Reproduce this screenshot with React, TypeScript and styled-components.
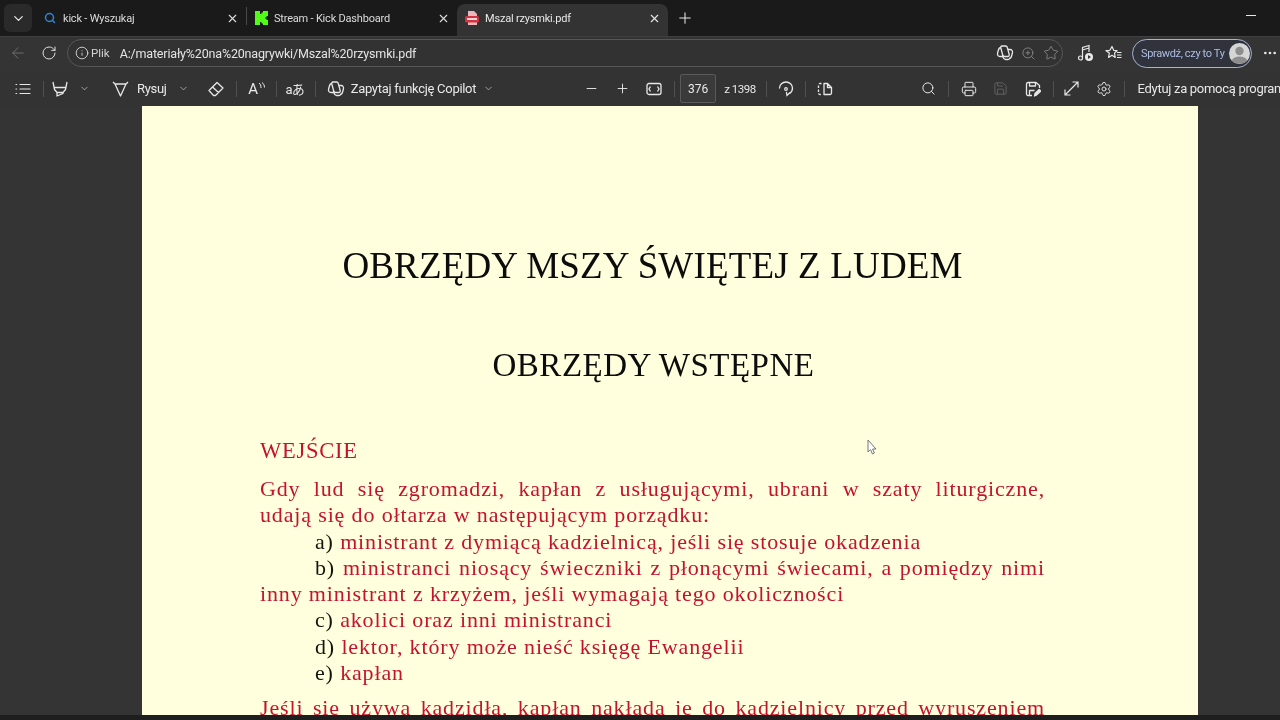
import styled, { createGlobalStyle } from "styled-components";
import {
  ArrowLeft,
  ChevronDown,
  Info,
  Minus,
  MoreHorizontal,
  Plus,
  Printer,
  RotateCw,
  Save,
  Search,
  Settings,
  Star,
  X,
  ZoomIn,
} from "lucide-react";

const GlobalStyle = createGlobalStyle`
  html, body {
    margin: 0;
    padding: 0;
    height: 100%;
    overflow: hidden;
    background: #333;
  }
`;

const CopilotIcon = ({ size = 18 }: { size?: number }) => (
  <svg width={size} height={size} viewBox="0 0 18 18" fill="none" stroke="currentColor" strokeWidth="1.3" strokeLinejoin="round">
    <path d="M6 2h3.500c1 0 1.600.6 1.800 1.500l1.900 7c.3 1.100-.4 2-1.500 2H8.500c-1 0-1.600-.6-1.800-1.500l-1.900-7C4.500 3 5 2 6 2z" />
    <path d="M5 3.500C3.500 3.500 2.800 4.500 2.400 6L1.600 9c-.5 2 .5 3.500 2.400 3.500h3" />
    <path d="M13 14.500c1.500 0 2.200-1 2.600-2.500l.8-3c.5-2-.5-3.500-2.400-3.500h-2M6.500 11l.5 2c.3 1 .9 2.500 2.500 2.500H12c1 0 1.500-.5 1.500-1" />
  </svg>
);

const HighlightIcon = () => (
  <svg width="16" height="18" viewBox="0 0 16 18" fill="none" stroke="currentColor" strokeWidth="1.300" strokeLinejoin="round">
    <path d="M1 2l1.500 7.500 2.500 3V16l6-2.500v-1l2.500-3L15 2M2.200 7.500h11.600M5 12.500h6" />
  </svg>
);

const DrawIcon = () => (
  <svg width="17" height="18" viewBox="0 0 17 18" fill="none" stroke="currentColor" strokeWidth="1.300" strokeLinejoin="round">
    <path d="M1 2l2 2h11l2-2M3 4l5.500 12L14 4" />
  </svg>
);

const EraserIcon = () => (
  <svg width="16" height="16" viewBox="0 0 16 16" fill="none" stroke="currentColor" strokeWidth="1.300" strokeLinejoin="round">
    <path d="M1 9.500L9 1.500l6 5.500-7.500 7.500H5.500zM4.500 6l6 5.500" />
  </svg>
);

const ReadAloudIcon = () => (
  <svg width="7" height="8" viewBox="0 0 7 8" fill="none" stroke="currentColor" strokeWidth="1">
    <path d="M1 1c1.500 1 2 2.500 2 5M4 .5c1.500 1 2.500 3 2.500 5" />
  </svg>
);

const FitIcon = () => (
  <svg width="16" height="14" viewBox="0 0 16 14" fill="none" stroke="currentColor" strokeWidth="1.300">
    <rect x="1" y="1.500" width="14" height="11" rx="2" />
    <path d="M4.500 4.500L3 7l1.500 2.500M11.500 4.500L13 7l-1.500 2.500" />
  </svg>
);

const RotateIcon = () => (
  <svg width="16" height="16" viewBox="0 0 16 16" fill="none" stroke="currentColor" strokeWidth="1.300" strokeLinecap="round">
    <path d="M1.500 7a6.500 6 0 0 1 13 0c0 2.500-1 4.300-3 5.500" />
    <path d="M14 10l-2.500 2.500-.5-3" transform="translate(-2.500 2)" />
    <circle cx="8" cy="8" r="1.300" />
  </svg>
);

const PageViewIcon = () => (
  <svg width="16" height="14" viewBox="0 0 16 14" fill="none" stroke="currentColor" strokeWidth="1.300" strokeLinejoin="round">
    <path d="M4.500 1.500H3a1.500 1.500 0 0 0-1.500 1.500v8A1.500 1.500 0 0 0 3 12.500h1.500" strokeDasharray="2.500 1.500" />
    <path d="M7 1.500h3.500l4 4v5.500a1.500 1.500 0 0 1-1.500 1.500H7zM10.500 1.500v4h4" />
  </svg>
);

const SaveAsIcon = () => (
  <svg width="16" height="16" viewBox="0 0 16 16" fill="none" stroke="currentColor" strokeWidth="1.300" strokeLinejoin="round">
    <path d="M7 14.500H3a1.500 1.500 0 0 1-1.500-1.500V3A1.500 1.500 0 0 1 3 1.500h8L14.500 4.500V7" />
    <path d="M4.500 1.500V5h6V1.500M4.500 14V9.500h5" />
    <path d="M9.500 15l.7-2.800 4-3.700 1.500 1.600-4 3.800z" fill="currentColor" />
  </svg>
);

const ExpandIcon = () => (
  <svg width="15" height="15" viewBox="0 0 15 15" fill="none" stroke="currentColor" strokeWidth="1.200">
    <path d="M1 14L14 1M8.500 1H14v5.500M1 8.500V14h5.500" />
  </svg>
);

const ListIcon = () => (
  <svg width="16" height="14" viewBox="0 0 16 14" fill="none" stroke="currentColor" strokeWidth="1.200" strokeLinecap="round">
    <path d="M5 2.500h10M5 7h10M5 11.500h10M1 2.500h.6M1 7h.6M1 11.500h.6" />
  </svg>
);

const MusicIcon = () => (
  <svg width="18" height="18" viewBox="0 0 18 18" fill="none" stroke="currentColor" strokeWidth="1.200">
    <circle cx="3.500" cy="14" r="2" />
    <path d="M5.500 14V3.500l6.500-2V8M5.500 6l6.500-2" />
    <circle cx="12" cy="13" r="4" fill="#e8e8e8" stroke="none" />
    <path d="M11 11v4l3-2z" fill="#333" stroke="none" />
  </svg>
);

const FavListIcon = () => (
  <svg width="17" height="16" viewBox="0 0 17 16" fill="none" stroke="currentColor" strokeWidth="1.200" strokeLinejoin="round">
    <path d="M7 1.500l1.700 3.800 3.300.4-2.500 2.400.7 4.300L7 10.300l-3.400 2.100.7-4.300L1 5.700l3.900-.4z" />
    <path d="M12 7.500h4.500M12 10h4.500M12 12.500h4.500" />
  </svg>
);

const KickIcon = () => (
  <svg width="13" height="14" viewBox="0 0 13 14">
    <path fill="#53fc18" d="M0 0h5v3h1.500V1.500H8V0h5v5h-1.500v1.500H10v1h1.500V9H13v5H8v-1.500H6.500V11H5v3H0z" />
  </svg>
);

const PdfIcon = () => (
  <svg width="14" height="14" viewBox="0 0 14 14">
    <path fill="#e8b8bc" d="M3 0h6l3 3v11H3z" />
    <rect x="0" y="5" width="14" height="6.500" rx="1.500" fill="#d2343f" />
    <rect x="2" y="7" width="10" height="2" fill="#f6d6d8" />
  </svg>
);

const AvatarIcon = () => (
  <svg width="21" height="21" viewBox="0 0 21 21">
    <circle cx="10.500" cy="10.500" r="10.500" fill="#d6d6d6" />
    <circle cx="10.500" cy="8" r="4.200" fill="#8d8d8d" />
    <path d="M2.800 17.500C4 14.500 7 13.500 10.500 13.500s6.500 1 7.700 4a10.500 10.500 0 0 1-15.400 0z" fill="#8d8d8d" />
  </svg>
);

const CursorIcon = () => (
  <svg width="10" height="16" viewBox="0 0 10 16">
    <path d="M1 1v12l2.600-2.400L5.400 15l2-1-1.800-4H9z" fill="#fff" stroke="#777" strokeWidth="1" />
  </svg>
);

const App = () => {
  return (
    <Window>
      <GlobalStyle />
      <TabBar>
        <TabMenu>
          <ChevronDown size={15} />
        </TabMenu>
        <Tab>
          <TabFavicon>
            <Search size={12} strokeWidth={3} color="#2f86d6" />
          </TabFavicon>
          <TabTitle>kick - Wyszukaj</TabTitle>
          <X size={13} />
        </Tab>
        <TabDivider />
        <Tab>
          <TabFavicon>
            <KickIcon />
          </TabFavicon>
          <TabTitle>Stream - Kick Dashboard</TabTitle>
          <X size={13} />
        </Tab>
        <Tab $active>
          <TabFavicon>
            <PdfIcon />
          </TabFavicon>
          <TabTitle>Mszal rzysmki.pdf</TabTitle>
          <X size={13} />
        </Tab>
        <NewTab>
          <Plus size={18} strokeWidth={1.4} />
        </NewTab>
        <WindowControls>
          <Minimize />
        </WindowControls>
      </TabBar>

      <AddressBar>
        <NavButton $dim>
          <ArrowLeft size={18} strokeWidth={1.3} />
        </NavButton>
        <NavButton>
          <RotateCw size={16} strokeWidth={1.5} />
        </NavButton>
        <UrlField>
          <Info size={14} strokeWidth={1.4} />
          <UrlScheme>Plik</UrlScheme>
          <UrlText>A:/materiały%20na%20nagrywki/Mszal%20rzysmki.pdf</UrlText>
          <UrlActions>
            <CopilotIcon />
            <DimIcon>
              <ZoomIn size={15} strokeWidth={1.3} />
            </DimIcon>
            <DimIcon>
              <Star size={16} strokeWidth={1.2} />
            </DimIcon>
          </UrlActions>
        </UrlField>
        <BarIcon $ml={11}>
          <MusicIcon />
        </BarIcon>
        <BarIcon $ml={3}>
          <FavListIcon />
        </BarIcon>
        <ProfilePill>
          <ProfileText>Sprawdź, czy to Ty</ProfileText>
          <AvatarIcon />
        </ProfilePill>
        <MoreButton>
          <MoreHorizontal size={16} />
        </MoreButton>
      </AddressBar>

      <PdfToolbar>
        <Tool $w={30} $ml={8}>
          <ListIcon />
        </Tool>
        <Divider $ml={5} />
        <Tool $w={26} $ml={3}>
          <HighlightIcon />
        </Tool>
        <Tool $w={22}>
          <ChevronDown size={11} strokeWidth={1.3} />
        </Tool>
        <Tool $w={28} $ml={11}>
          <DrawIcon />
        </Tool>
        <ToolLabel $ml={3}>Rysuj</ToolLabel>
        <Tool $w={14} $ml={10}>
          <ChevronDown size={11} strokeWidth={1.3} />
        </Tool>
        <Tool $w={24} $ml={13}>
          <EraserIcon />
        </Tool>
        <Divider $ml={8} />
        <Tool $w={24} $ml={8}>
          <ReadAloud>
            A
            <ReadAloudIcon />
          </ReadAloud>
        </Tool>
        <Divider $ml={7} />
        <Tool $w={24} $ml={6}>
          <Translate>aあ</Translate>
        </Tool>
        <Divider $ml={8} />
        <Tool $w={24} $ml={8}>
          <CopilotIcon />
        </Tool>
        <ToolLabel $ml={3}>Zapytaj funkcję Copilot</ToolLabel>
        <Tool $w={14} $ml={5}>
          <ChevronDown size={11} strokeWidth={1.3} />
        </Tool>
        <Tool $w={24} $ml={84}>
          <Minus size={15} strokeWidth={1.5} />
        </Tool>
        <Tool $w={24} $ml={7}>
          <Plus size={15} strokeWidth={1.5} />
        </Tool>
        <Tool $w={24} $ml={8}>
          <FitIcon />
        </Tool>
        <Divider $ml={8} />
        <PageInput>376</PageInput>
        <ToolLabel $ml={8} $small>
          z 1398
        </ToolLabel>
        <Divider $ml={10} />
        <Tool $w={24} $ml={7}>
          <RotateIcon />
        </Tool>
        <Divider $ml={7} />
        <Tool $w={24} $ml={7}>
          <PageViewIcon />
        </Tool>
        <Tool $w={24} $ml={80}>
          <Search size={15} strokeWidth={1.6} />
        </Tool>
        <Divider $ml={7} />
        <Tool $w={24} $ml={8}>
          <Printer size={16} strokeWidth={1.5} />
        </Tool>
        <Tool $w={24} $ml={8} $off>
          <Save size={15} strokeWidth={1.3} />
        </Tool>
        <Tool $w={24} $ml={8}>
          <SaveAsIcon />
        </Tool>
        <Divider $ml={8} />
        <Tool $w={24} $ml={6}>
          <ExpandIcon />
        </Tool>
        <Tool $w={24} $ml={8}>
          <Settings size={16} strokeWidth={1.4} />
        </Tool>
        <Divider $ml={8} />
        <ToolLabel $ml={13}>Edytuj za pomocą programu</ToolLabel>
      </PdfToolbar>

      <Viewer>
        <Page>
          <MainTitle>OBRZĘDY MSZY ŚWIĘTEJ Z LUDEM</MainTitle>
          <SubTitle>OBRZĘDY WSTĘPNE</SubTitle>
          <RubricHead>WEJŚCIE</RubricHead>
          <Rubric>
            <Line $justify>Gdy lud się zgromadzi, kapłan z usługującymi, ubrani w szaty liturgiczne,</Line>
            <Line>udają się do ołtarza w następującym porządku:</Line>
            <Line $indent>
              <Mark>a)</Mark> ministrant z dymiącą kadzielnicą, jeśli się stosuje okadzenia
            </Line>
            <Line $indent $justify>
              <Mark>b)</Mark> ministranci niosący świeczniki z płonącymi świecami, a pomiędzy nimi
            </Line>
            <Line>inny ministrant z krzyżem, jeśli wymagają tego okoliczności</Line>
            <Line $indent>
              <Mark>c)</Mark> akolici oraz inni ministranci
            </Line>
            <Line $indent>
              <Mark>d)</Mark> lektor, który może nieść księgę Ewangelii
            </Line>
            <Line $indent>
              <Mark>e)</Mark> kapłan
            </Line>
          </Rubric>
          <Rubric $gap>
            <Line $justify>Jeśli się używa kadzidła, kapłan nakłada je do kadzielnicy przed wyruszeniem</Line>
          </Rubric>
          <MouseCursor>
            <CursorIcon />
          </MouseCursor>
        </Page>
      </Viewer>
      <BottomStrip />
    </Window>
  );
};

const uiFont = `Roboto, "Open Sans", sans-serif`;
const bookFont = `"Liberation Serif", "Times New Roman", serif`;

const Window = styled.div`
  width: 1280px;
  height: 720px;
  display: flex;
  flex-direction: column;
  overflow: hidden;
  background: #333;
  color: #e8e8e8;
  font-family: ${uiFont};
  filter: blur(0.3px);
`;

const TabBar = styled.div`
  height: 36px;
  flex-shrink: 0;
  display: flex;
  align-items: flex-end;
  padding-left: 4px;
  background: #1a1a1a;
`;

const TabMenu = styled.div`
  width: 28px;
  height: 28px;
  margin: 0 3px 4px 0;
  display: flex;
  align-items: center;
  justify-content: center;
  border-radius: 6px;
  background: #2a2a2a;
`;

const Tab = styled.div<{ $active?: boolean }>`
  width: 211px;
  height: 32px;
  box-sizing: border-box;
  display: flex;
  align-items: center;
  padding: 0 7px 4px 8px;
  border-radius: 8px 8px 0 0;
  background: ${(p) => (p.$active ? "#333" : "transparent")};
  font-size: 11px;
  letter-spacing: -0.2px;
  color: ${(p) => (p.$active ? "#e8e8e8" : "#dcdcdc")};

  &:nth-of-type(1) {
    width: 210px;
  }
`;

const TabFavicon = styled.span`
  width: 14px;
  display: flex;
  align-items: center;
  justify-content: center;
  margin-right: 6px;
`;

const TabTitle = styled.span`
  flex: 1;
  white-space: nowrap;
`;

const TabDivider = styled.div`
  width: 1px;
  height: 18px;
  margin: 0 -1px 11px 0;
  background: #4a4a4a;
`;

const NewTab = styled.div`
  width: 34px;
  height: 28px;
  margin-bottom: 4px;
  display: flex;
  align-items: center;
  justify-content: center;
`;

const WindowControls = styled.div`
  flex: 1;
  height: 36px;
  display: flex;
  justify-content: flex-end;
  align-items: center;
  padding-right: 24px;
`;

const Minimize = styled.div`
  width: 10px;
  height: 1px;
  margin-bottom: 6px;
  background: #e8e8e8;
`;

const AddressBar = styled.div`
  height: 35px;
  flex-shrink: 0;
  display: flex;
  align-items: center;
  padding: 0 0 2px 2px;
  background: #343434;
  box-sizing: border-box;
  border-top: 1px solid #3f3f3f;
`;

const NavButton = styled.div<{ $dim?: boolean }>`
  width: 31px;
  display: flex;
  justify-content: center;
  color: ${(p) => (p.$dim ? "#6e6e6e" : "#dedede")};
`;

const UrlField = styled.div`
  width: 996px;
  height: 28px;
  margin-left: 3px;
  box-sizing: border-box;
  display: flex;
  align-items: center;
  padding: 0 3px 0 7px;
  border: 1px solid #565656;
  border-radius: 14px;
  background: #323232;
`;

const UrlScheme = styled.span`
  margin-left: 2px;
  font-size: 11.5px;
  color: #d4d4d4;
`;

const UrlText = styled.span`
  margin-left: 10px;
  font-size: 12.5px;
  letter-spacing: -0.17px;
  white-space: nowrap;
  color: #e4e4e4;
`;

const UrlActions = styled.div`
  margin-left: auto;
  display: flex;
  align-items: center;
  gap: 7px;
`;

const DimIcon = styled.span`
  display: flex;
  color: #8f8f8f;
`;

const BarIcon = styled.div<{ $ml: number }>`
  width: 24px;
  margin-left: ${(p) => p.$ml}px;
  display: flex;
  justify-content: center;
`;

const ProfilePill = styled.div`
  width: 120px;
  height: 29px;
  margin-left: 7px;
  box-sizing: border-box;
  display: flex;
  align-items: center;
  justify-content: space-between;
  padding: 0 1px 0 8px;
  border: 1.5px solid #a7b2d6;
  border-radius: 15px;
  background: #30323c;
`;

const ProfileText = styled.span`
  font-size: 11px;
  letter-spacing: -0.35px;
  white-space: nowrap;
  color: #aebde2;
`;

const MoreButton = styled.div`
  margin-left: 10px;
  display: flex;
`;

const PdfToolbar = styled.div`
  height: 35px;
  box-sizing: border-box;
  flex-shrink: 0;
  display: flex;
  align-items: center;
  overflow: hidden;
  background: #333;
  white-space: nowrap;
`;

const Tool = styled.div<{ $w: number; $ml?: number; $off?: boolean }>`
  flex-shrink: 0;
  width: ${(p) => p.$w}px;
  margin-left: ${(p) => p.$ml ?? 0}px;
  display: flex;
  justify-content: center;
  align-items: center;
  color: ${(p) => (p.$off ? "#6a6a6a" : "#e8e8e8")};
`;

const ToolLabel = styled.span<{ $ml: number; $small?: boolean }>`
  flex-shrink: 0;
  margin-left: ${(p) => p.$ml}px;
  font-size: ${(p) => (p.$small ? 11.5 : 13)}px;
  letter-spacing: ${(p) => (p.$small ? -0.5 : -0.3)}px;
  color: #e8e8e8;
`;

const Divider = styled.div<{ $ml: number }>`
  flex-shrink: 0;
  width: 1px;
  height: 16px;
  margin-left: ${(p) => p.$ml}px;
  background: #505050;
`;

const ReadAloud = styled.span`
  display: flex;
  align-items: flex-start;
  font-size: 15px;
  line-height: 16px;

  svg {
    margin-top: 1px;
  }
`;

const Translate = styled.span`
  font-family: ${uiFont}, "Noto Sans CJK JP";
  font-size: 13px;
  letter-spacing: -1px;
`;

const PageInput = styled.div`
  flex-shrink: 0;
  width: 36px;
  height: 29px;
  margin-left: 5px;
  box-sizing: border-box;
  display: flex;
  align-items: center;
  justify-content: center;
  border: 1px solid #5a5a5a;
  border-radius: 2px;
  background: #3a3a3a;
  font-size: 12px;
`;

const Viewer = styled.main`
  flex: 1;
  min-height: 0;
  overflow: hidden;
  padding-left: 142px;
  background: #343434;
`;

const Page = styled.article`
  position: relative;
  width: 1056px;
  height: 100%;
  box-sizing: border-box;
  overflow: hidden;
  padding: 138px 153px 0 118px;
  background: #ffffde;
  font-family: ${bookFont};
  color: #0c0c0c;
`;

const MainTitle = styled.h1`
  margin: 0;
  font-size: 37px;
  font-weight: 400;
  line-height: 44px;
  letter-spacing: 0.15px;
  text-align: center;
  white-space: nowrap;
`;

const SubTitle = styled.h2`
  margin: 58px 0 0 2px;
  font-size: 33px;
  font-weight: 400;
  line-height: 38px;
  letter-spacing: 0.5px;
  text-align: center;
  white-space: nowrap;
`;

const RubricHead = styled.h3`
  margin: 54px 0 0;
  font-size: 22.5px;
  font-weight: 400;
  line-height: 26px;
  color: #c4122f;
  letter-spacing: 0.75px;
`;

const Rubric = styled.div<{ $gap?: boolean }>`
  margin-top: ${(p) => (p.$gap ? 9 : 12)}px;
  font-size: 22px;
  line-height: 26.3px;
  letter-spacing: 0.85px;
  color: #c4122f;
`;

const Line = styled.div<{ $indent?: boolean; $justify?: boolean }>`
  white-space: ${(p) => (p.$justify ? "normal" : "nowrap")};
  padding-left: ${(p) => (p.$indent ? 55 : 0)}px;
  text-align: ${(p) => (p.$justify ? "justify" : "left")};
  text-align-last: ${(p) => (p.$justify ? "justify" : "left")};
`;

const Mark = styled.span`
  color: #14140f;
`;

const MouseCursor = styled.div`
  position: absolute;
  left: 725px;
  top: 333px;
  display: flex;
`;

const BottomStrip = styled.div`
  height: 5px;
  flex-shrink: 0;
  background: #1e1e1e;
`;

export default App;
